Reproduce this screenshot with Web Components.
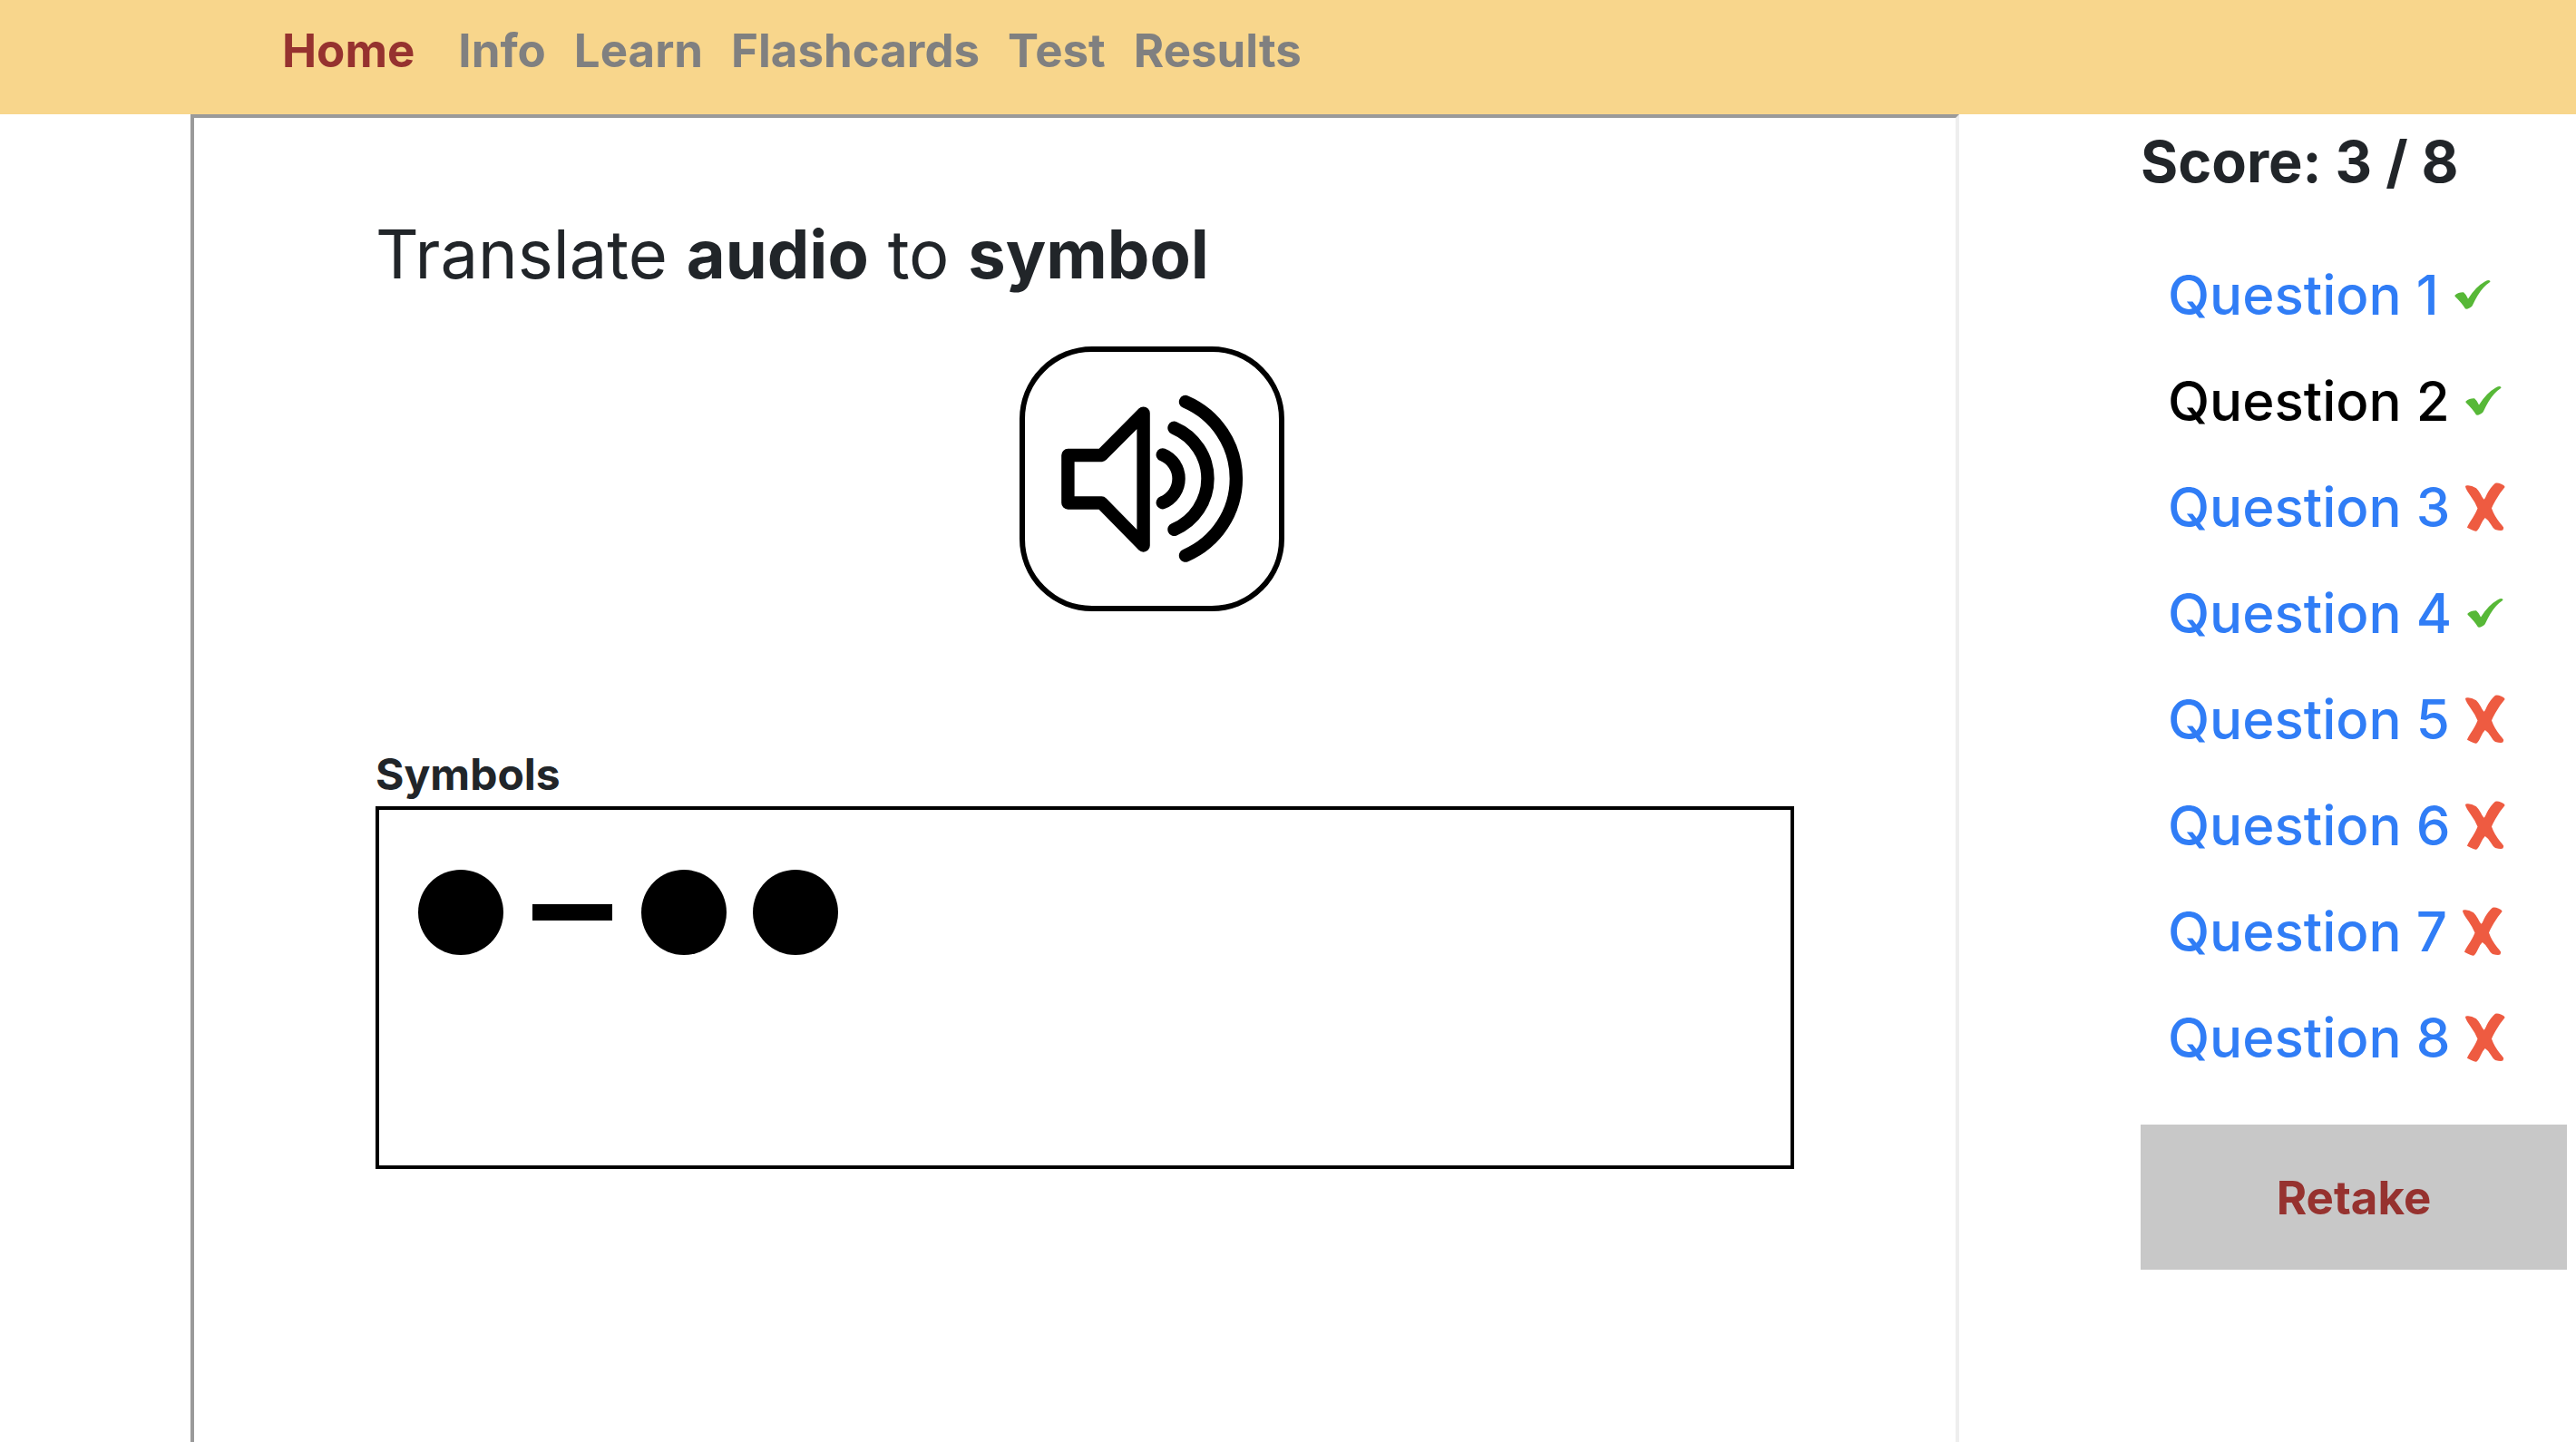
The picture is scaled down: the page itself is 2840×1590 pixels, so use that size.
<!DOCTYPE html>
<html lang="en">
<head>
<meta charset="utf-8">
<title>Morse quiz</title>
<style>
  body { margin: 0; background: #fff; color: #212529; font-family: Inter, "Liberation Sans", sans-serif; }
</style>
</head>
<body>
<quiz-page></quiz-page>

<template id="t-page">
  <style>
    :host { display: flex; flex-direction: column; height: 100vh; overflow: hidden; }
    main { flex: 1; display: grid; grid-template-columns: minmax(0, 1fr) 470px; column-gap: 200px; padding: 0 10px 0 210px; }
  </style>
  <site-nav></site-nav>
  <main>
    <quiz-stage></quiz-stage>
    <score-panel></score-panel>
  </main>
</template>

<template id="t-nav">
  <style>
    :host { display: block; background: #f8d68c; }
    nav { display: flex; align-items: center; gap: 31px; height: 126px; box-sizing: border-box; padding: 0 311px 14px; font-weight: 700; font-size: 51px; line-height: 60px; }
    a { color: #808080; text-decoration: none; }
    a.brand { color: #96322f; margin-right: 17px; }
  </style>
  <nav aria-label="Main">
    <a class="brand" href="#home">Home</a>
    <a href="#info">Info</a>
    <a href="#learn">Learn</a>
    <a href="#flashcards">Flashcards</a>
    <a href="#test">Test</a>
    <a href="#results">Results</a>
  </nav>
</template>

<template id="t-stage">
  <style>
    :host { display: block; border: 4px solid; border-color: #9a9a9a #eee #eee #9a9a9a; border-bottom: 0; padding: 100px 178px 0 200px; }
    h1 { margin: 0; font-weight: 400; font-size: 74px; line-height: 100px; }
    .audio { display: flex; justify-content: center; padding: 52px 0 150px 148px; }
    h2 { margin: 0; font-size: 48px; line-height: 60px; }
    .box { box-sizing: border-box; height: 400px; border: 4px solid #000; margin-top: 5px; padding: 66px 43px; display: flex; align-items: flex-start; gap: 29px; }
  </style>
  <h1>Translate <b>audio</b> to <b>symbol</b></h1>
  <div class="audio"><audio-button></audio-button></div>
  <h2 id="symbols">Symbols</h2>
  <div class="box" role="group" aria-labelledby="symbols">
    <morse-mark></morse-mark>
    <morse-mark kind="dash"></morse-mark>
    <morse-mark></morse-mark>
    <morse-mark></morse-mark>
  </div>
</template>

<template id="t-audio">
  <style>
    :host { display: block; }
    button { display: block; box-sizing: border-box; width: 292px; height: 292px; padding: 0; background: #fff; border: 6px solid #000; border-radius: 80px; }
    svg { display: block; fill: none; stroke: #000; stroke-width: 14.4; stroke-linecap: round; stroke-linejoin: round; }
  </style>
  <button type="button" aria-label="Play audio">
    <svg width="280" height="280" viewBox="0 0 280 280">
      <path d="M47.4 114H84.500L130.600 67.600V213.500L84.500 166.500H47.400Z"/>
      <path d="M151.800 113.400A28.500 28.500 0 0 1 151.800 166.200"/>
      <path d="M164.500 83.800A60.900 60.900 0 0 1 164.500 195.800"/>
      <path d="M177 55A92.300 92.300 0 0 1 177 224.600"/>
    </svg>
  </button>
</template>

<template id="t-mark">
  <style>
    :host { display: flex; width: 94px; height: 94px; align-items: center; justify-content: center; }
    i { width: 94px; height: 94px; border-radius: 50%; background: #000; }
    :host([kind="dash"]) i { width: 88px; height: 18px; border-radius: 0; }
  </style>
  <i></i>
</template>

<template id="t-score">
  <style>
    :host { display: block; padding-top: 10px; }
    h2 { margin: 0; font-size: 63px; line-height: 84px; }
    ul { list-style: none; margin: 0; padding: 46px 0 0 30px; }
    button { width: 100%; height: 160px; margin-top: 38px; border: 0; padding: 0; background: #c8c8c8; color: #96322f; font: inherit; font-weight: 700; font-size: 51px; }
  </style>
  <h2>Score: 3 / 8</h2>
  <ul>
    <question-item right>Question 1</question-item>
    <question-item right current>Question 2</question-item>
    <question-item>Question 3</question-item>
    <question-item right>Question 4</question-item>
    <question-item>Question 5</question-item>
    <question-item>Question 6</question-item>
    <question-item>Question 7</question-item>
    <question-item>Question 8</question-item>
  </ul>
  <button type="button">Retake</button>
</template>

<template id="t-question">
  <style>
    :host { display: flex; align-items: center; height: 117px; gap: 16px; }
    a { color: #307df6; text-decoration: none; font-weight: 500; font-size: 60px; line-height: 80px; white-space: nowrap; }
    :host([current]) a { color: #000; }
    svg { display: none; flex: none; }
    :host([right]) .yes, :host(:not([right])) .no { display: block; }
  </style>
  <a href="#question"><slot></slot></a>
  <svg class="yes" width="46" height="54" viewBox="0 0 46 54" role="img" aria-label="Correct"><path fill="#57b837" d="M1.500 27.500Q5.500 24 11 24.200Q13.500 26 16 31.500Q24.500 18 34.500 12.500Q38.500 10.500 39.500 11.300Q41.500 12 39.500 13.500Q32.500 18 26.500 28Q23.500 33 21 38.500Q20 41 15 42.700L13 42.500Q9 36 1.500 28.800Z"/></svg>
  <svg class="no" width="46" height="54" viewBox="0 0 46 54" role="img" aria-label="Incorrect"><path fill="#ee5b41" d="M1 4.500Q1 3 4 3.200Q8 3.200 13 6.200Q15 8 17.800 12.800Q19.500 16.500 21.500 18.800Q23 17.500 24.500 13.500Q28.500 5.500 34 .8Q35.500 0 38 .8Q44 2.500 44.600 5Q39 11.500 34.500 19.500Q31 25.500 30 28.500Q33 37 39.500 45Q43 49 43.200 50Q42.500 52.500 42.300 52.600Q40 53.500 34 52Q31.500 50.500 29 46Q26.500 41.500 22.800 39Q20.500 41 18 46.500Q15.500 52 13.500 53.600Q12 54.500 3 49.800Q2.800 49 6.500 43Q12 35 14.500 28.500Q12 22 6.500 14.500Q1.500 7.500 1 4.500Z"/></svg>
</template>

<script>
  const parts = {
    'quiz-page': 't-page',
    'site-nav': 't-nav',
    'quiz-stage': 't-stage',
    'audio-button': 't-audio',
    'morse-mark': 't-mark',
    'score-panel': 't-score',
    'question-item': 't-question'
  };
  for (const [name, id] of Object.entries(parts)) {
    customElements.define(name, class extends HTMLElement {
      constructor() {
        super();
        this.attachShadow({ mode: 'open' })
          .append(document.getElementById(id).content.cloneNode(true));
      }
      connectedCallback() {
        if (name === 'question-item') this.setAttribute('role', 'listitem');
      }
    });
  }
</script>
</body>
</html>
